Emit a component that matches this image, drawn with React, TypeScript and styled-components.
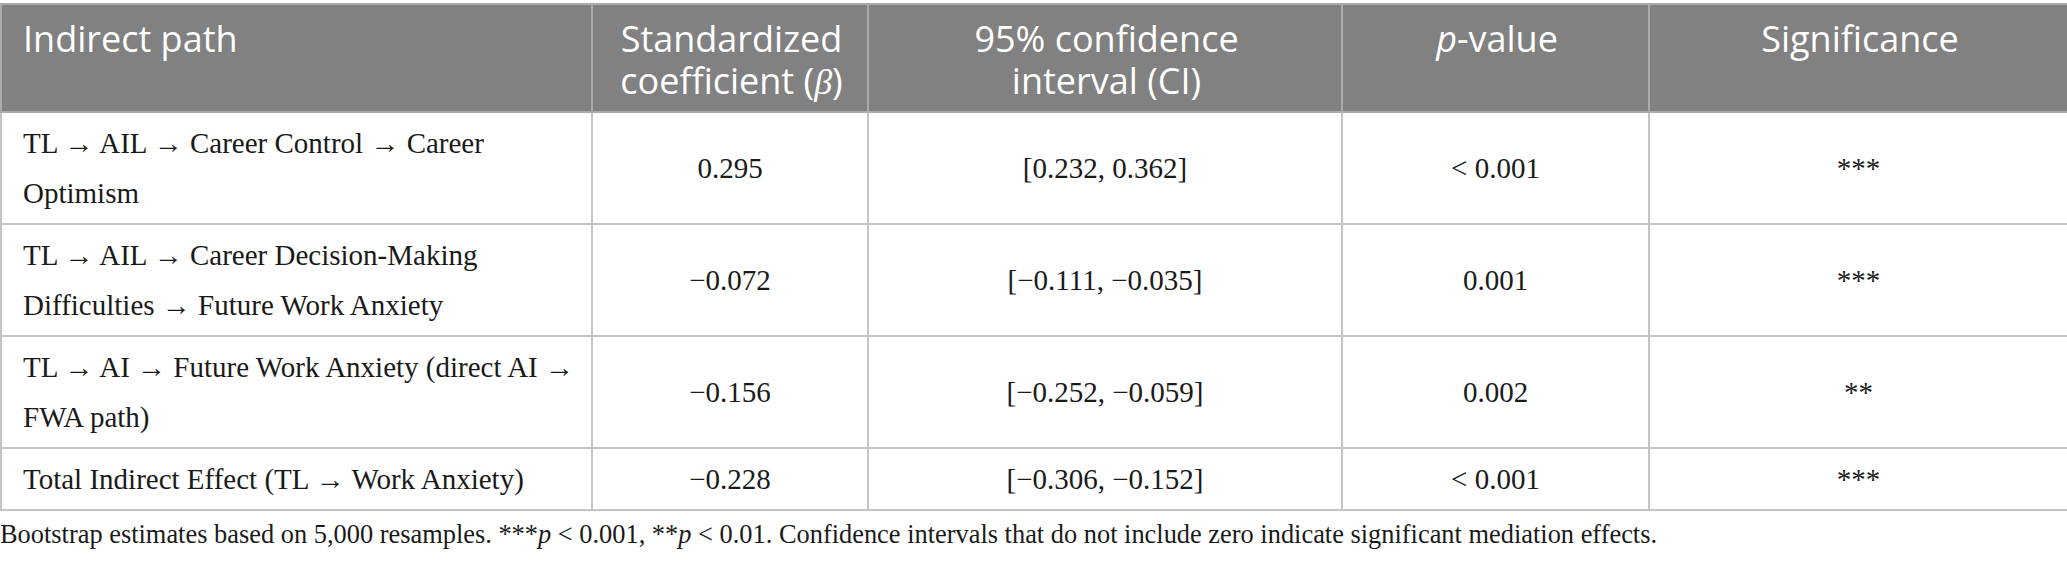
import React from "react";
import styled, { createGlobalStyle } from "styled-components";

const GlobalStyle = createGlobalStyle`
  html, body {
    margin: 0;
    padding: 0;
    background: #ffffff;
  }
`;

const Page = styled.div`
  width: 2067px;
  padding-top: 3px;
  box-sizing: border-box;
`;

const Table = styled.table`
  width: 2067px;
  border-collapse: collapse;
  table-layout: fixed;
  border: 2px solid #bcbcbc;
`;

const HeadCell = styled.th<{ $align?: "left" | "center" }>`
  background: #808180;
  color: #ffffff;
  font-family: "Open Sans", "Noto Sans", sans-serif;
  font-weight: 400;
  font-size: 36px;
  line-height: 42px;
  padding: 13px 18px 8px 21px;
  vertical-align: top;
  text-align: ${(p) => p.$align ?? "center"};
  border: 2px solid #a9aaa9;
`;

const BodyCell = styled.td<{ $align?: "left" | "center" }>`
  font-family: "Liberation Serif", "Times New Roman", serif;
  font-size: 29px;
  line-height: 50px;
  color: #1a1a1a;
  padding: 5px ${(p) => (p.$align === "left" ? "6px" : "21px")} 5px 21px;
  vertical-align: middle;
  text-align: ${(p) => p.$align ?? "center"};
  border: 2px solid #c4c4c4;
`;

const Beta = styled.i`
  font-family: "Liberation Serif", serif;
`;

const Note = styled.p`
  margin: 8px 0 0 0;
  font-family: "Liberation Serif", "Times New Roman", serif;
  font-size: 26.4px;
  line-height: 30px;
  color: #1a1a1a;
`;

type Row = { path: string; beta: string; ci: string; p: string; sig: string };

const rows: Row[] = [
  {
    path: "TL → AIL → Career Control → Career Optimism",
    beta: "0.295",
    ci: "[0.232, 0.362]",
    p: "< 0.001",
    sig: "***",
  },
  {
    path: "TL → AIL → Career Decision-Making Difficulties → Future Work Anxiety",
    beta: "−0.072",
    ci: "[−0.111, −0.035]",
    p: "0.001",
    sig: "***",
  },
  {
    path: "TL → AI → Future Work Anxiety (direct AI → FWA path)",
    beta: "−0.156",
    ci: "[−0.252, −0.059]",
    p: "0.002",
    sig: "**",
  },
  {
    path: "Total Indirect Effect (TL → Work Anxiety)",
    beta: "−0.228",
    ci: "[−0.306, −0.152]",
    p: "< 0.001",
    sig: "***",
  },
];

export default function App() {
  return (
    <Page>
      <GlobalStyle />
      <Table>
        <colgroup>
          <col style={{ width: 591 }} />
          <col style={{ width: 276 }} />
          <col style={{ width: 474 }} />
          <col style={{ width: 307 }} />
          <col style={{ width: 419 }} />
        </colgroup>
        <thead>
          <tr>
            <HeadCell $align="left">Indirect path</HeadCell>
            <HeadCell>
              Standardized
              <br />
              coefficient (<Beta>β</Beta>)
            </HeadCell>
            <HeadCell>
              95% confidence
              <br />
              interval (CI)
            </HeadCell>
            <HeadCell>
              <i>p</i>-value
            </HeadCell>
            <HeadCell>Significance</HeadCell>
          </tr>
        </thead>
        <tbody>
          {rows.map((r) => (
            <tr key={r.path}>
              <BodyCell $align="left">{r.path}</BodyCell>
              <BodyCell>{r.beta}</BodyCell>
              <BodyCell>{r.ci}</BodyCell>
              <BodyCell>{r.p}</BodyCell>
              <BodyCell>{r.sig}</BodyCell>
            </tr>
          ))}
        </tbody>
      </Table>
      <Note>
        Bootstrap estimates based on 5,000 resamples. ***<i>p</i> &lt; 0.001, **<i>p</i> &lt; 0.01.
        Confidence intervals that do not include zero indicate significant mediation effects.
      </Note>
    </Page>
  );
}
